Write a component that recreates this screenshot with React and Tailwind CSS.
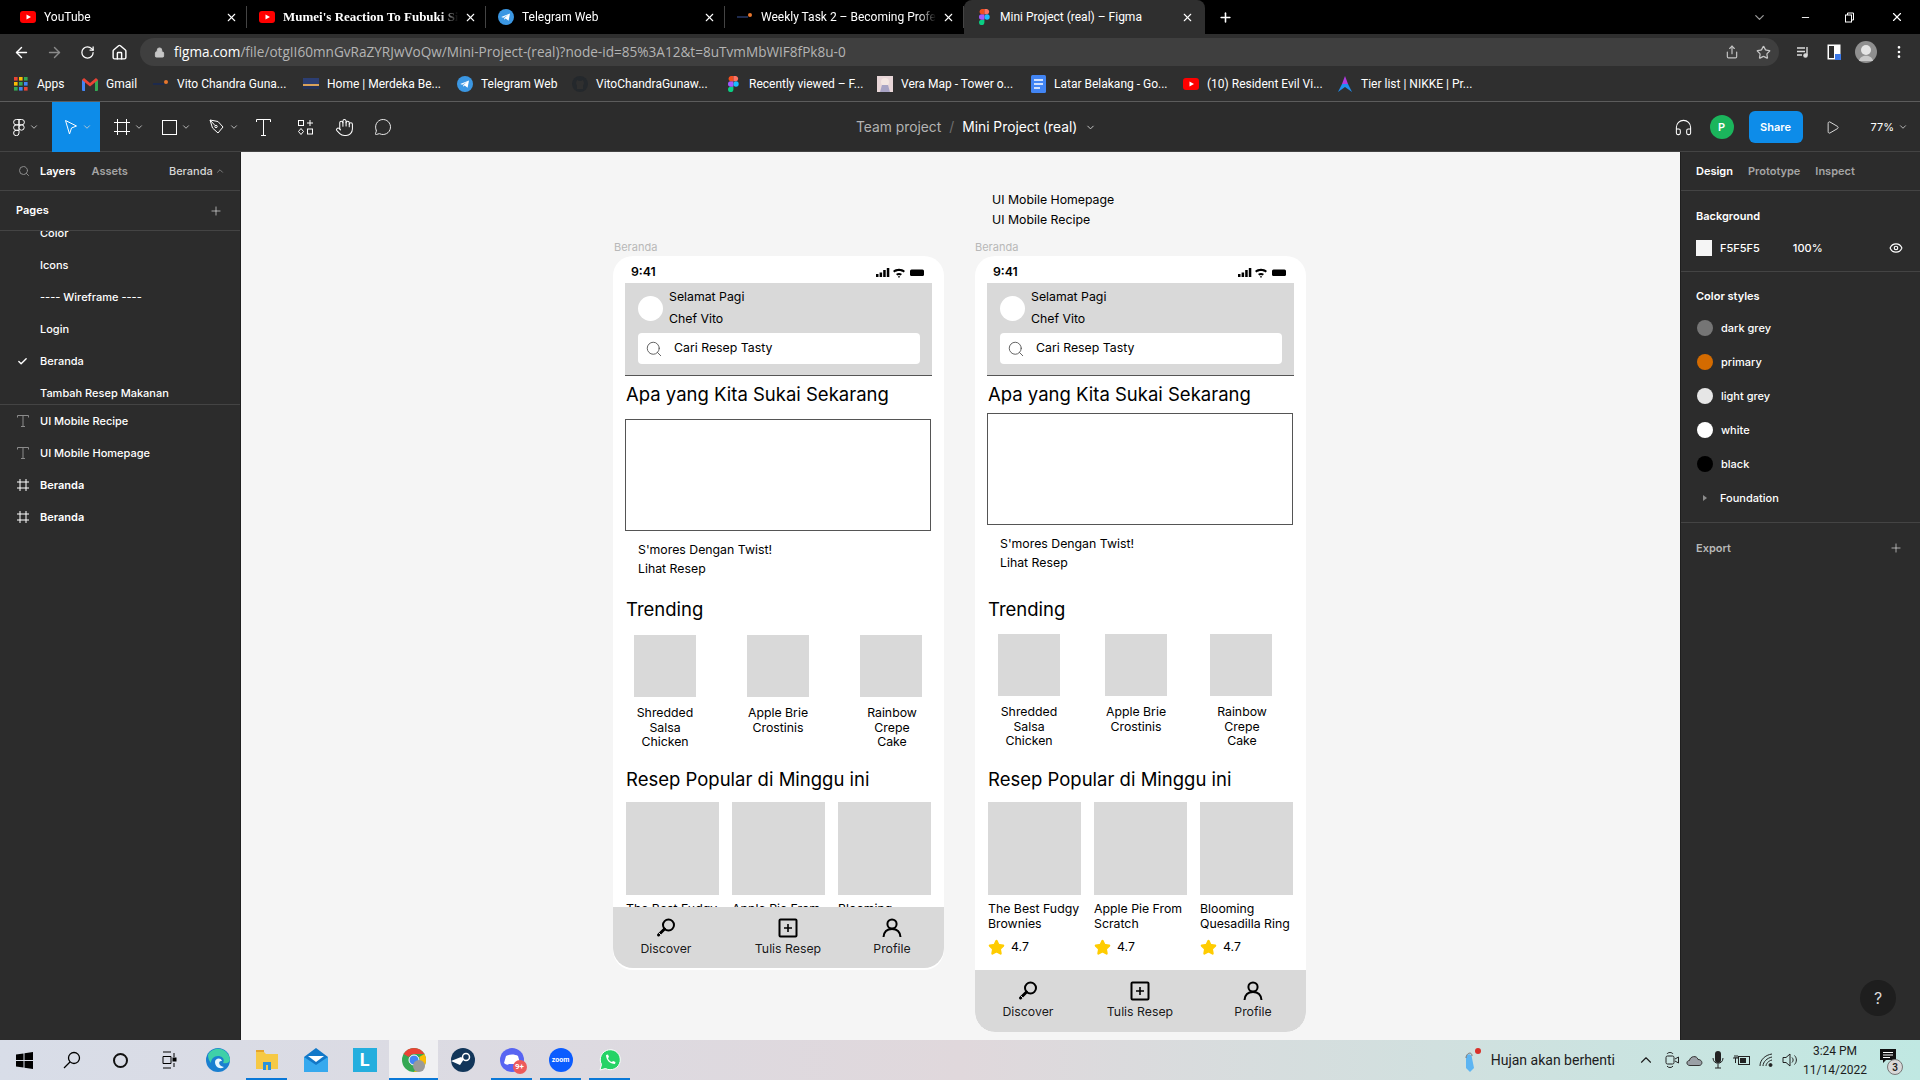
import {
  ArrowLeft,
  ArrowRight,
  RotateCw,
  Home,
  Lock,
  Share,
  Star,
  ChevronDown,
  ChevronUp,
  X,
  Plus,
  Minus,
  Search,
  Check,
  Eye,
  Hand,
  MessageCircle,
  Play,
  Headphones,
  MoreVertical,
} from "lucide-react";

function YoutubeIcon() {
  return (
    <svg width="16" height="16" viewBox="0 0 16 16">
      <rect x="0" y="2" width="16" height="12" rx="3" fill="#f00" />
      <path d="M6.5 5.5 L11 8 L6.5 10.5 Z" fill="#fff" />
    </svg>
  );
}

function TelegramIcon() {
  return (
    <svg width="16" height="16" viewBox="0 0 16 16">
      <circle cx="8" cy="8" r="8" fill="#3b97e3" />
      <path d="M3.2 8 L12 4.4 L10.6 11.8 L7.6 9.6 L6.4 10.8 L6.2 9 L10.2 5.8 L5.2 8.8 Z" fill="#fff" />
    </svg>
  );
}

function FigmaIcon() {
  return (
    <svg width="11" height="16" viewBox="0 0 11 16">
      <circle cx="8" cy="8" r="2.7" fill="#1abcfe" />
      <path d="M5.4 10.7 H2.7 a2.7 2.7 0 1 0 2.7 2.7 Z" fill="#0acf83" />
      <path d="M5.4 5.3 H2.7 a2.7 2.7 0 0 0 0 5.4 H5.4 Z" fill="#a259ff" />
      <path d="M5.4 0 H2.7 a2.7 2.7 0 0 0 0 5.3 H5.4 Z" fill="#f24e1e" />
      <path d="M5.4 0 H8 a2.7 2.7 0 0 1 0 5.3 H5.4 Z" fill="#ff7262" />
    </svg>
  );
}

function MerdekaIcon() {
  return (
    <svg width="16" height="16" viewBox="0 0 16 16">
      <rect x="0" y="7" width="11" height="2" fill="#1d2a4d" />
      <circle cx="13" cy="6" r="2" fill="#e8772e" />
    </svg>
  );
}

function GmailIcon() {
  return (
    <svg width="16" height="13" viewBox="0 0 16 13">
      <path d="M0 2 L3 1 V13 H1 a1 1 0 0 1 -1 -1 Z" fill="#4285f4" />
      <path d="M16 2 L13 1 V13 H15 a1 1 0 0 0 1 -1 Z" fill="#34a853" />
      <path d="M0 2 L2 0 L8 5 L14 0 L16 2 L8 8.5 Z" fill="#ea4335" />
    </svg>
  );
}

function Favicon({ type }) {
  if (type === "yt") return <YoutubeIcon />;
  if (type === "tg") return <TelegramIcon />;
  if (type === "figma") return <FigmaIcon />;
  if (type === "md") return <MerdekaIcon />;
  if (type === "gmail") return <GmailIcon />;
  if (type === "apps") {
    return (
      <svg width="14" height="14" viewBox="0 0 14 14">
        {[0, 5, 10].map((y, i) =>
          [0, 5, 10].map((x, j) => (
            <rect
              key={`${i}${j}`}
              x={x}
              y={y}
              width="3.6"
              height="3.6"
              fill={["#ea4335", "#fbbc04", "#34a853", "#4285f4"][(i + j) % 4]}
            />
          ))
        )}
      </svg>
    );
  }
  if (type === "news") {
    return (
      <svg width="16" height="14" viewBox="0 0 16 14">
        <rect y="1" width="16" height="6" fill="#2c3e73" />
        <rect y="7" width="16" height="2" fill="#d8a15a" />
        <rect y="9" width="16" height="3" fill="#233056" />
      </svg>
    );
  }
  if (type === "gh") {
    return (
      <svg width="16" height="16" viewBox="0 0 16 16">
        <circle cx="8" cy="8" r="8" fill="#24282c" />
        <path d="M5 13 V10 L4 7 L5 4 L7 5 H9 L11 4 L12 7 L11 10 V13 Z" fill="#2f2f2f" />
      </svg>
    );
  }
  if (type === "vera") {
    return (
      <svg width="16" height="16" viewBox="0 0 16 16">
        <rect width="16" height="16" fill="#e8d6d8" />
        <circle cx="8" cy="6" r="4" fill="#f4e6e2" />
        <path d="M3 16 L5 9 H11 L13 16 Z" fill="#a8a3c4" />
      </svg>
    );
  }
  if (type === "docs") {
    return (
      <svg width="15" height="18" viewBox="0 0 15 18">
        <rect width="15" height="18" rx="1.5" fill="#4285f4" />
        <path d="M3 5 H12 M3 9 H12 M3 13 H9" stroke="#fff" strokeWidth="1.6" />
      </svg>
    );
  }
  if (type === "tier") {
    return (
      <svg width="14" height="16" viewBox="0 0 14 16">
        <path d="M7 0 L10 8 L4 8 Z" fill="#b13be0" />
        <path d="M4 8 H10 L14 16 L7 11 L0 16 Z" fill="#1f8ef1" />
      </svg>
    );
  }
  return null;
}

const tabs = [
  { title: "YouTube", icon: "yt" },
  { title: "Mumei's Reaction To Fubuki Singing", icon: "yt", bold: true },
  { title: "Telegram Web", icon: "tg" },
  { title: "Weekly Task 2 – Becoming Professional", icon: "md" },
];

function TabBar() {
  return (
    <div className="h-[34px] bg-black flex items-stretch pl-[8px] text-white text-[12px]">
      {tabs.map((t) => (
        <div key={t.title} className="w-[239px] flex items-center pl-[12px] pr-[8px] border-r border-[#444] my-[6px]">
          <div className="w-[16px] flex justify-center mr-[8px] shrink-0">
            <Favicon type={t.icon} />
          </div>
          <div
            className={
              t.bold
                ? "flex-1 overflow-hidden whitespace-nowrap text-[13px] font-bold font-[family-name:'Liberation_Serif'] [mask-image:linear-gradient(to_right,black_90%,transparent)]"
                : "flex-1 overflow-hidden whitespace-nowrap [mask-image:linear-gradient(to_right,black_90%,transparent)]"
            }
          >
            {t.title}
          </div>
          <X size={13} className="ml-[6px] shrink-0" strokeWidth={2} />
        </div>
      ))}
      <div className="w-[241px] bg-[#2f2f2f] rounded-t-[8px] flex items-center pl-[15px] pr-[11px]">
        <div className="mr-[10px] flex">
          <FigmaIcon />
        </div>
        <div className="flex-1 whitespace-nowrap overflow-hidden">Mini Project (real) – Figma</div>
        <X size={13} strokeWidth={2} />
      </div>
      <div className="flex items-center ml-[13px]">
        <Plus size={15} strokeWidth={2.5} />
      </div>
      <div className="flex items-center ml-auto">
        <ChevronDown size={15} className="text-[#9a9a9a] mr-[33px]" />
        <Minus size={11} className="mr-[33px]" />
        <svg width="11" height="11" viewBox="0 0 11 11" className="mr-[35px]" fill="none" stroke="#fff">
          <rect x="1.5" y="3" width="6" height="7" />
          <path d="M3.5 3 V1 H9.5 V8 H7.5" />
        </svg>
        <X size={14} className="mr-[16px]" />
      </div>
    </div>
  );
}

function AddressBar() {
  return (
    <div className="h-[34px] pt-[2px] bg-[#2f2f2f] flex items-center text-white">
      <ArrowLeft size={17} className="ml-[13px]" />
      <ArrowRight size={17} className="ml-[16px] text-[#8a8a8a]" />
      <RotateCw size={15} className="ml-[17px]" />
      <Home size={17} className="ml-[16px]" />
      <div className="ml-[12px] w-[1639px] h-[28px] rounded-full bg-[#3f3f3f] flex items-center pl-[14px] pr-[8px]">
        <Lock size={11} className="text-[#c6c6c6] mr-[9px]" fill="#c6c6c6" />
        <span className="text-[13.6px] whitespace-nowrap font-[family-name:'Open_Sans']">
          figma.com
          <span className="text-[#b4b4b4]">/file/otgII60mnGvRaZYRJwVoQw/Mini-Project-(real)?node-id=85%3A12&t=8uTvmMbWIF8fPk8u-0</span>
        </span>
        <Share size={14} className="ml-auto text-[#c6c6c6] mr-[17px]" />
        <Star size={15} className="text-[#c6c6c6]" />
      </div>
      <svg width="14" height="14" viewBox="0 0 14 14" className="ml-[17px]" fill="none" stroke="#dcdcdc" strokeWidth="1.4">
        <path d="M1 3 H9 M1 6.5 H9 M1 10 H6 M11 2 V10" />
        <circle cx="9.5" cy="10.5" r="1.6" fill="#dcdcdc" />
      </svg>
      <svg width="14" height="16" viewBox="0 0 14 16" className="ml-[17px]">
        <rect x="0.5" y="0.5" width="13" height="15" fill="#fff" />
        <rect x="2" y="2" width="5" height="12" fill="#2f2f2f" />
        <rect x="8" y="10" width="6" height="6" fill="#3b78e7" />
      </svg>
      <svg width="22" height="22" viewBox="0 0 22 22" className="ml-[14px]">
        <circle cx="11" cy="11" r="11" fill="#8f8f8f" />
        <circle cx="11" cy="9" r="5" fill="#e4e4e4" />
        <path d="M4 20 C5 13 17 13 18 20 Z" fill="#c9c9c9" />
      </svg>
      <MoreVertical size={16} className="ml-[14px]" />
    </div>
  );
}

const bookmarks = [
  { title: "Apps", icon: "apps", width: "w-[69px]" },
  { title: "Gmail", icon: "gmail", width: "w-[71px]" },
  { title: "Vito Chandra Guna...", icon: "md", width: "w-[150px]" },
  { title: "Home | Merdeka Be...", icon: "news", width: "w-[154px]" },
  { title: "Telegram Web", icon: "tg", width: "w-[115px]" },
  { title: "VitoChandraGunaw...", icon: "gh", width: "w-[153px]" },
  { title: "Recently viewed – F...", icon: "figma", width: "w-[152px]" },
  { title: "Vera Map - Tower o...", icon: "vera", width: "w-[153px]" },
  { title: "Latar Belakang - Go...", icon: "docs", width: "w-[153px]" },
  { title: "(10) Resident Evil Vi...", icon: "yt", width: "w-[154px]" },
  { title: "Tier list | NIKKE | Pr...", icon: "tier", width: "w-[140px]" },
];

function BookmarkBar() {
  return (
    <div className="h-[34px] pb-[1px] bg-[#2f2f2f] border-b border-[#5c5c5c] flex items-center pl-[13px] text-white text-[12px]">
      {bookmarks.map((b) => (
        <div key={b.title} className={`${b.width} flex items-center shrink-0 whitespace-nowrap`}>
          <div className="w-[16px] flex justify-center mr-[8px]">
            <Favicon type={b.icon} />
          </div>
          {b.title}
        </div>
      ))}
    </div>
  );
}

function SmallChevron() {
  return <ChevronDown size={10} className="text-[#d0d0d0] ml-[4px]" />;
}

function FigmaToolbar() {
  return (
    <div className="h-[50px] bg-[#2c2c2c] shadow-[inset_0_-1px_0_#444] flex items-center text-white text-[13.8px] font-[family-name:Inter] shrink-0">
      <div className="w-[52px] flex items-center justify-center">
        <svg width="12" height="17" viewBox="0 0 12 17" fill="none" stroke="#fff">
          <circle cx="8.5" cy="8.5" r="2.7" />
          <path d="M6 .5 H3.3 a2.7 2.7 0 0 0 0 5.4 H6 Z M6 .5 H8.7 a2.7 2.7 0 0 1 0 5.4 H6 Z M6 5.9 H3.3 a2.7 2.7 0 0 0 0 5.4 H6 Z M6 11.3 H3.3 a2.7 2.7 0 1 0 2.7 2.7 Z" />
        </svg>
        <SmallChevron />
      </div>
      <div className="w-[48px] h-full bg-[#0d8ce9] flex items-center justify-center pl-[4px]">
        <svg width="14" height="17" viewBox="0 0 14 17" fill="none" stroke="#fff">
          <path d="M1.5 1.5 L12.5 7 L7.5 9 L5.5 15 Z" />
        </svg>
        <SmallChevron />
      </div>
      <div className="w-[46px] flex items-center justify-center ml-[6px]">
        <svg width="16" height="16" viewBox="0 0 16 16" fill="none" stroke="#fff">
          <path d="M3.5 0 V16 M12.5 0 V16 M0 3.5 H16 M0 12.5 H16" />
        </svg>
        <SmallChevron />
      </div>
      <div className="w-[48px] flex items-center justify-center">
        <div className="w-[15px] h-[15px] border border-white" />
        <SmallChevron />
      </div>
      <div className="w-[48px] flex items-center justify-center">
        <svg width="16" height="16" viewBox="0 0 16 16" fill="none" stroke="#fff">
          <path d="M1 1 L9 2.5 L14 8 L9 14 L3.5 9 Z M1 1 L6 6.5" />
          <circle cx="7" cy="7.5" r="1.2" />
        </svg>
        <SmallChevron />
      </div>
      <div className="w-[30px] flex items-center justify-center">
        <svg width="15" height="17" viewBox="0 0 15 17" fill="none" stroke="#fff">
          <path d="M.5 3 V.5 H14.5 V3 M7.5 .5 V16.5 M5 16.5 H10" />
        </svg>
      </div>
      <div className="w-[54px] flex items-center justify-center">
        <svg width="15" height="15" viewBox="0 0 15 15" fill="none" stroke="#fff">
          <rect x=".5" y=".5" width="5" height="5" />
          <path d="M9 3 H15 M12 0 V6" />
          <path d="M3 8.5 L5.5 11.5 L3 14.5 L.5 11.5 Z" />
          <rect x="9.5" y="9" width="5" height="5" />
        </svg>
      </div>
      <div className="w-[24px] flex items-center justify-center">
        <Hand size={19} strokeWidth={1.3} />
      </div>
      <div className="w-[54px] flex items-center justify-center">
        <MessageCircle size={18} strokeWidth={1.2} />
      </div>
      <div className="ml-[446px] flex items-center whitespace-nowrap">
        <span className="text-[#b3b3b3]">Team project</span>
        <span className="text-[#6e6e6e] mx-[8px]">/</span>
        <span>Mini Project (real)</span>
        <ChevronDown size={11} className="ml-[8px] text-[#d0d0d0]" />
      </div>
      <div className="ml-auto flex items-center">
        <Headphones size={19} strokeWidth={1.3} />
        <div className="ml-[17px] w-[24px] h-[24px] rounded-full bg-[#1bb55c] flex items-center justify-center text-[11px] font-semibold">
          P
        </div>
        <div className="ml-[15px] w-[54px] h-[32px] rounded-[6px] bg-[#0d8ce9] flex items-center justify-center text-[11px] font-semibold">
          Share
        </div>
        <Play size={15} strokeWidth={1.3} className="ml-[22px]" />
        <span className="ml-[31px] text-[11px]">77%</span>
        <ChevronDown size={10} className="ml-[4px] mr-[12px] text-[#d0d0d0]" />
      </div>
    </div>
  );
}

function PageRow({ label, checked }) {
  return (
    <div className="h-[32px] flex items-center text-white">
      <div className="w-[40px] flex justify-center pl-[4px]">{checked && <Check size={11} strokeWidth={3} />}</div>
      {label}
    </div>
  );
}

function LayerRow({ label, kind }) {
  return (
    <div className={kind === "frame" ? "h-[32px] flex items-center text-white font-semibold" : "h-[32px] flex items-center text-white"}>
      <div className="w-[40px] flex justify-center pl-[6px]">
        {kind === "text" ? (
          <svg width="12" height="12" viewBox="0 0 12 12" fill="none" stroke="#8c8c8c">
            <path d="M.5 2.5 V.5 H11.5 V2.5 M6 .5 V11.5 M4 11.5 H8" />
          </svg>
        ) : (
          <svg width="12" height="12" viewBox="0 0 12 12" fill="none" stroke="#fff">
            <path d="M3 0 V12 M9 0 V12 M0 3 H12 M0 9 H12" />
          </svg>
        )}
      </div>
      {label}
    </div>
  );
}

function LeftPanel() {
  return (
    <div className="w-[241px] bg-[#2c2c2c] border-r border-[#1f1f1f] text-[11px] font-[family-name:Inter] font-medium shrink-0">
      <div className="h-[39px] border-b border-[#444] flex items-center">
        <Search size={12} className="ml-[18px] text-[#8c8c8c]" />
        <span className="ml-[10px] text-white font-semibold">Layers</span>
        <span className="ml-[16px] text-[#a5a5a5] font-semibold">Assets</span>
        <span className="ml-[41px] text-[#d6d6d6]">Beranda</span>
        <ChevronUp size={10} className="ml-[2px] text-[#8c8c8c]" />
      </div>
      <div className="h-[40px] border-b border-[#444] flex items-center pl-[16px] text-white font-semibold">
        Pages
        <Plus size={14} strokeWidth={1} className="ml-auto mr-[17px]" />
      </div>
      <div className="h-[174px] overflow-hidden border-b border-[#444]">
        <div className="-mt-[14px]">
          <PageRow label="Color" />
          <PageRow label="Icons" />
          <PageRow label="---- Wireframe ----" />
          <PageRow label="Login" />
          <PageRow label="Beranda" checked />
          <PageRow label="Tambah Resep Makanan" />
        </div>
      </div>
      <LayerRow label="UI Mobile Recipe" kind="text" />
      <LayerRow label="UI Mobile Homepage" kind="text" />
      <LayerRow label="Beranda" kind="frame" />
      <LayerRow label="Beranda" kind="frame" />
    </div>
  );
}

function Signal() {
  return (
    <svg width="48" height="11" viewBox="0 0 48 11">
      <rect x="0" y="7" width="2.5" height="3" fill="#000" />
      <rect x="3.6" y="5.5" width="2.5" height="4.5" fill="#000" />
      <rect x="7.2" y="3" width="2.5" height="7" fill="#000" />
      <rect x="10.8" y="1" width="2.5" height="9" fill="#000" />
      <path d="M17 4 C20 1 26 1 29 4 L27.5 5.5 C25 3.5 21 3.5 18.5 5.5 Z M20 7 C22 5.5 24 5.5 26 7 L24.6 8.4 C23.6 7.7 22.4 7.7 21.4 8.4 Z M23 11 L21.8 9.6 C22.6 9 23.4 9 24.2 9.6 Z" fill="#000" />
      <rect x="34" y="2.5" width="14" height="6.5" rx="1.5" fill="#000" />
    </svg>
  );
}

function DiscoverIcon() {
  return (
    <svg width="20" height="20" viewBox="0 0 20 20" fill="none" stroke="#000" strokeWidth="2">
      <circle cx="12.5" cy="7" r="5.5" />
      <path d="M8.5 11 L2.5 17" strokeWidth="3" strokeLinecap="round" />
      <path d="M3 15 L5 17" stroke="#d9d9d9" strokeWidth="1" />
    </svg>
  );
}

function TulisIcon() {
  return (
    <svg width="20" height="20" viewBox="0 0 20 20" fill="none" stroke="#000">
      <rect x="1.5" y="1.5" width="17" height="17" rx="1" strokeWidth="2" />
      <path d="M10 6 V14 M6 10 H14" strokeWidth="1.6" />
    </svg>
  );
}

function ProfileIcon() {
  return (
    <svg width="20" height="20" viewBox="0 0 20 20" fill="none" stroke="#000" strokeWidth="2">
      <circle cx="10" cy="6" r="4.6" />
      <path d="M1.5 19 C2 13 6 11 10 11 C14 11 18 13 18.5 19" />
    </svg>
  );
}

function BottomNav({ className, gap1, gap2 }) {
  return (
    <div className={`bg-[#d9d9d9] rounded-b-[20px] flex pl-[3px] text-[12.3px] text-black/90 ${className}`}>
      <div className="w-[100px] flex flex-col items-center">
        <DiscoverIcon />
        <span className="leading-[16px] mt-[3px]">Discover</span>
      </div>
      <div className={`w-[100px] flex flex-col items-center ${gap1}`}>
        <TulisIcon />
        <span className="leading-[16px] mt-[3px]">Tulis Resep</span>
      </div>
      <div className={`w-[100px] flex flex-col items-center ${gap2}`}>
        <ProfileIcon />
        <span className="leading-[16px] mt-[3px]">Profile</span>
      </div>
    </div>
  );
}

const trending = [
  { lines: ["Shredded", "Salsa", "Chicken"], shift: "" },
  { lines: ["Apple Brie", "Crostinis"], shift: "" },
  { lines: ["Rainbow", "Crepe", "Cake"], shift: "translate-x-[1px]" },
];

const popular = [
  ["The Best Fudgy", "Brownies"],
  ["Apple Pie From", "Scratch"],
  ["Blooming", "Quesadilla Ring"],
];

function SectionTitle({ className, children }) {
  return <div className={`h-[24px] leading-[24px] text-[18.5px] text-black pl-[13px] whitespace-nowrap ${className}`}>{children}</div>;
}

function Phone({ className, clipped, s }) {
  return (
    <div className={`absolute w-[331px] bg-white rounded-[20px] overflow-hidden font-[family-name:Inter] text-black ${className}`}>
      <div className="h-[27px] flex items-center justify-between pl-[18px] pr-[20px] pt-[5px]">
        <span className="text-[12.3px] font-semibold leading-[16px]">9:41</span>
        <Signal />
      </div>

      <div className="mx-[12px] h-[93px] bg-[#d9d9d9] border-b border-[#555] pl-[13px] pr-[12px]">
        <div className="flex h-[50px] items-center">
          <div className="w-[25px] h-[25px] rounded-full bg-white" />
          <div className="ml-[6px] text-[12.3px] leading-[22px]">
            <div>Selamat Pagi</div>
            <div>Chef Vito</div>
          </div>
        </div>
        <div className="h-[31px] bg-white rounded-[4px] flex items-center pl-[7px] text-[12.3px]">
          <Search size={18} strokeWidth={1.2} className="text-[#555]" />
          <span className="ml-[11px]">Cari Resep Tasty</span>
        </div>
      </div>

      <SectionTitle className="mt-[6px]">Apa yang Kita Sukai Sekarang</SectionTitle>

      <div className={`mx-[12px] h-[112px] w-[306px] border border-[#555] ${s.hero}`} />

      <div className={`pl-[25px] text-[12.3px] leading-[18px] ${s.caption}`}>
        <div>S'mores Dengan Twist!</div>
        <div className="mt-[0.5px]">Lihat Resep</div>
      </div>

      <SectionTitle className={s.trending}>Trending</SectionTitle>

      <div className={`flex ${s.thumbs}`}>
        {trending.map((item, i) => (
          <div key={item.lines[0]} className={`w-[62px] shrink-0 ${s.thumbGaps[i]}`}>
            <div className="h-[62px] bg-[#d9d9d9]" />
            <div className={`mt-[9px] flex flex-col items-center text-[12.3px] leading-[14.7px] whitespace-nowrap ${item.shift}`}>
              {item.lines.map((l) => (
                <div key={l}>{l}</div>
              ))}
            </div>
          </div>
        ))}
      </div>

      <SectionTitle className={s.popular}>Resep Popular di Minggu ini</SectionTitle>

      <div className="mt-[11px] pl-[13px] flex gap-[13px]">
        {popular.map((lines) => (
          <div key={lines[0]} className="w-[93px] shrink-0">
            <div className="h-[93px] bg-[#d9d9d9]" />
            <div className="mt-[7px] text-[12.3px] leading-[14.7px] whitespace-nowrap">
              {lines.map((l) => (
                <div key={l}>{l}</div>
              ))}
            </div>
            <div className="mt-[8px] flex items-center h-[16px] text-[12.3px]">
              <Star size={17} fill="#ffcc00" stroke="#ffcc00" />
              <span className="ml-[6px]">4.7</span>
            </div>
          </div>
        ))}
      </div>

      {clipped ? (
        <BottomNav className="absolute left-0 right-0 bottom-[2px] h-[61px] pt-[11px]" gap1="ml-[22px]" gap2="ml-[4px]" />
      ) : (
        <BottomNav className="mt-[14px] h-[62px] pt-[11px]" gap1="ml-[12px]" gap2="ml-[13px]" />
      )}
    </div>
  );
}

function Canvas() {
  return (
    <div className="relative flex-1 bg-[#f5f5f5] font-[family-name:Inter]">
      <div className="absolute left-[751px] top-[38px] text-[12.3px] leading-[20px] text-black">
        <div>UI Mobile Homepage</div>
        <div>UI Mobile Recipe</div>
      </div>

      <div className="absolute left-[373px] top-[88px] text-[11px] leading-[14px] text-[#b8b8b8]">Beranda</div>
      <div className="absolute left-[734px] top-[88px] text-[11px] leading-[14px] text-[#b8b8b8]">Beranda</div>

      <Phone
        className="left-[372px] top-[104px] h-[714px]"
        clipped
        s={{
          hero: "mt-[13px]",
          caption: "mt-[10px]",
          trending: "mt-[19.5px]",
          thumbs: "mt-[14px]",
          thumbGaps: ["ml-[21px]", "ml-[51px]", "ml-[51px]"],
          popular: "mt-[17px]",
        }}
      />
      <Phone
        className="left-[734px] top-[104px]"
        s={{
          hero: "mt-[7px]",
          caption: "mt-[10px]",
          trending: "mt-[25.5px]",
          thumbs: "mt-[13px]",
          thumbGaps: ["ml-[23px]", "ml-[45px]", "ml-[43px]"],
          popular: "mt-[18px]",
        }}
      />
    </div>
  );
}

const colorStyles = [
  { name: "dark grey", color: "bg-[#757575]" },
  { name: "primary", color: "bg-[#d46b00]" },
  { name: "light grey", color: "bg-[#e6e6e6]" },
  { name: "white", color: "bg-white" },
  { name: "black", color: "bg-black" },
];

function RightPanel() {
  return (
    <div className="relative w-[240px] bg-[#2c2c2c] border-l border-[#1f1f1f] text-[11px] font-[family-name:Inter] font-medium text-white shrink-0">
      <div className="h-[39px] border-b border-[#444] flex items-center pl-[15px] font-semibold">
        <span>Design</span>
        <span className="ml-[15px] text-[#a5a5a5]">Prototype</span>
        <span className="ml-[15px] text-[#a5a5a5]">Inspect</span>
      </div>
      <div className="h-[81px] border-b border-[#444] px-[15px]">
        <div className="h-[49px] flex items-center font-semibold pt-[1px]">Background</div>
        <div className="flex items-center h-[16px]">
          <div className="w-[16px] h-[16px] bg-[#f5f5f5]" />
          <span className="ml-[8px]">F5F5F5</span>
          <span className="ml-[33px]">100%</span>
          <Eye size={14} className="ml-auto mr-[2px]" />
        </div>
      </div>
      <div className="h-[251px] border-b border-[#444] px-[15px]">
        <div className="h-[39px] flex items-center font-semibold pt-[9px]">Color styles</div>
        {colorStyles.map((c) => (
          <div key={c.name} className="h-[34px] flex items-center">
            <div className={`w-[16px] h-[16px] rounded-full ml-[1px] ${c.color}`} />
            <span className="ml-[8px]">{c.name}</span>
          </div>
        ))}
        <div className="h-[34px] flex items-center">
          <svg width="6" height="6" viewBox="0 0 6 6" className="ml-[6px]">
            <path d="M1 0 L5 3 L1 6 Z" fill="#8c8c8c" />
          </svg>
          <span className="ml-[12px]">Foundation</span>
        </div>
      </div>
      <div className="h-[50px] flex items-center pl-[15px] pr-[16px] font-semibold text-[#b8b8b8]">
        Export
        <Plus size={14} strokeWidth={1} className="ml-auto mr-[1px] text-white" />
      </div>
      <div className="absolute right-[24px] bottom-[24px] w-[36px] h-[36px] rounded-full bg-[#1e1e1e] flex items-center justify-center text-[16px] font-normal text-[#d8d8d8]">
        ?
      </div>
    </div>
  );
}

function TaskIcon({ children, active, under }) {
  let cls = "w-[49px] h-[40px] flex items-center justify-center relative";
  if (active) cls += " bg-[#f0f0f2]";
  return (
    <div className={cls}>
      {children}
      {under && <div className="absolute left-[4px] right-[4px] bottom-0 h-[2px] bg-[#0a78d7]" />}
      {active && <div className="absolute left-0 right-0 bottom-0 h-[2px] bg-[#0a78d7]" />}
    </div>
  );
}

function Taskbar() {
  return (
    <div className="h-[40px] shrink-0 flex items-center bg-gradient-to-r from-[#d8dde8] via-[#e0d8dc] to-[#c0e8e2] text-[#1c1c1c]">
      <div className="w-[48px] flex justify-center">
        <svg width="17" height="17" viewBox="0 0 17 17" fill="#000">
          <path d="M0 2.5 L7.5 1.4 V8 H0 Z M8.5 1.2 L17 0 V8 H8.5 Z M0 9 H7.5 V15.6 L0 14.5 Z M8.5 9 H17 V17 L8.5 15.8 Z" />
        </svg>
      </div>
      <div className="w-[48px] flex justify-center">
        <svg width="18" height="18" viewBox="0 0 18 18" fill="none" stroke="#000" strokeWidth="1.3">
          <circle cx="11" cy="7" r="5.5" />
          <path d="M7 11 L1 17" />
        </svg>
      </div>
      <div className="w-[48px] flex justify-center">
        <div className="w-[15px] h-[15px] rounded-full border-[2.5px] border-[#111]" />
      </div>
      <div className="w-[49px] flex justify-center">
        <svg width="16" height="18" viewBox="0 0 16 18" fill="none" stroke="#000">
          <path d="M2 1 H10 M2 17 H10 M2 5.5 H10 V12.5 H2 Z M13 2 V6 M13 12 V16" />
          <rect x="12" y="7" width="3" height="3" fill="#000" />
        </svg>
      </div>
      <TaskIcon>
        <svg width="24" height="24" viewBox="0 0 24 24">
          <circle cx="12" cy="12" r="12" fill="#1a7fd0" />
          <path d="M2 7 C6 -2 21 -2 24 11 C24 15 20 16 17 15 C19 12 17 8 12 8 C8 8 5 11 5 15 C3 13 2 10 2 7 Z" fill="#3fd0a8" />
          <path d="M9 14 C9 10 15 9 16 13 C12 12 12 18 18 19 C14 22 9 19 9 14 Z" fill="#e8f7ff" />
        </svg>
      </TaskIcon>
      <TaskIcon under>
        <svg width="22" height="20" viewBox="0 0 22 20">
          <path d="M0 2 H8 L10 4 H22 V19 H0 Z" fill="#f6c945" />
          <path d="M0 0 H8 V2 H0 Z" fill="#e6a42b" />
          <rect x="7" y="12" width="8" height="8" fill="#2a93d8" />
          <rect x="10" y="15" width="2" height="5" fill="#f6c945" />
        </svg>
      </TaskIcon>
      <TaskIcon>
        <svg width="24" height="24" viewBox="0 0 24 24">
          <path d="M0 9 L12 0 L24 9 V24 H0 Z" fill="#1278c8" />
          <path d="M0 9 L12 17 L24 9 V24 H0 Z" fill="#36a9ee" />
          <path d="M4 8 H20 L12 14 Z" fill="#fff" />
        </svg>
      </TaskIcon>
      <TaskIcon>
        <div className="w-[24px] h-[24px] bg-[#24aede] flex items-center justify-center text-white text-[18px] font-bold leading-none">
          L
        </div>
      </TaskIcon>
      <TaskIcon active>
        <svg width="24" height="24" viewBox="0 0 24 24">
          <circle cx="12" cy="12" r="12" fill="#34a853" />
          <path d="M12 0 A12 12 0 0 1 22.4 6 H12 A6 6 0 0 0 6.8 9 L1.6 6 A12 12 0 0 1 12 0 Z" fill="#ea4335" />
          <path d="M22.4 6 A12 12 0 0 1 12 24 L17.2 15 A6 6 0 0 0 17.2 9 Z" fill="#fbbc04" />
          <circle cx="12" cy="12" r="5" fill="#4285f4" stroke="#fff" />
          <circle cx="17" cy="18" r="6" fill="#9a9a9a" />
        </svg>
      </TaskIcon>
      <TaskIcon>
        <svg width="24" height="24" viewBox="0 0 24 24">
          <circle cx="12" cy="12" r="12" fill="#12365a" />
          <circle cx="15" cy="9" r="3.5" fill="none" stroke="#fff" strokeWidth="1.5" />
          <path d="M0 13 L9 17 L13 11 L10 9 Z" fill="#fff" />
        </svg>
      </TaskIcon>
      <TaskIcon under>
        <div className="relative">
          <svg width="24" height="24" viewBox="0 0 24 24" className="block">
            <circle cx="12" cy="12" r="12" fill="#5865f2" />
            <path d="M6 8 C9 6 15 6 18 8 L20 15 C18 17 16 17 15 16 H9 C8 17 6 17 4 15 Z" fill="#fff" />
          </svg>
          <div className="absolute -right-[3px] -bottom-[2px] w-[14px] h-[14px] rounded-full bg-[#ed5a5a] text-white text-[8px] font-bold flex items-center justify-center">
            9+
          </div>
        </div>
      </TaskIcon>
      <TaskIcon under>
        <div className="w-[24px] h-[24px] rounded-full bg-[#0b5cff] flex items-center justify-center text-white text-[7px] font-bold">
          zoom
        </div>
      </TaskIcon>
      <TaskIcon under>
        <svg width="22" height="22" viewBox="0 0 22 22">
          <path d="M1 21 L2.5 15.5 A10 10 0 1 1 6.5 19.5 Z" fill="#25d366" stroke="#fff" />
          <path d="M7 6 C7 11 11 15 16 15 L16.5 13 L14 12 L13 13 C11 12.5 9.5 11 9 9 L10 8 L9 5.5 Z" fill="#fff" />
        </svg>
      </TaskIcon>

      <div className="ml-auto flex items-center">
        <svg width="12" height="24" viewBox="0 0 12 24">
          <path d="M2 10 C2 5 8 5 8 10 L10 20 L6 24 L2 20 Z" fill="#5db5f2" />
          <path d="M2 10 C2 5 8 3 8 8" fill="none" stroke="#777" />
        </svg>
        <div className="w-[6px] h-[6px] rounded-full bg-[#d9302a] -mt-[18px] -ml-[1px]" />
        <span className="ml-[10px] text-[14px] whitespace-nowrap">Hujan akan berhenti</span>
        <ChevronUp size={18} strokeWidth={1.5} className="ml-[22px]" />
        <svg width="14" height="18" viewBox="0 0 14 18" fill="none" stroke="#222" className="ml-[10px]">
          <rect x="1" y="5" width="8" height="8" rx="1.5" />
          <path d="M10 8 L13.5 6 V12 L10 10 M2 3 C3 1 7 1 8 3 M2 15 C3 17 7 17 8 15" />
        </svg>
        <svg width="17" height="11" viewBox="0 0 17 11" className="ml-[7px]" fill="#9aa0a6" stroke="#333">
          <path d="M4 10.5 C0 10.5 0 5.5 3.5 5.5 C4 1 11 0 12 4.5 C17 4.5 17 10.5 13 10.5 Z" />
        </svg>
        <svg width="12" height="18" viewBox="0 0 12 18" className="ml-[9px]">
          <rect x="3" y="0" width="6" height="12" rx="3" fill="#222" />
          <path d="M1 7 C1 14 11 14 11 7 M6 13 V17 M3 17 H9" fill="none" stroke="#222" />
        </svg>
        <svg width="17" height="12" viewBox="0 0 17 12" className="ml-[9px]" fill="none" stroke="#222">
          <rect x="5.5" y="2.5" width="11" height="8" />
          <rect x="7.5" y="4.5" width="5" height="4" fill="#222" />
          <path d="M0 4 H5 M2 1 V4 M4 1 V4 M2.5 4 V9" />
        </svg>
        <svg width="14" height="14" viewBox="0 0 14 14" className="ml-[9px]" fill="none" stroke="#222">
          <path d="M1 13 C1 7 6 2 13 1 M4 13 C4 9 8 5 13 4 M7 13 C7 11 9 8 13 7" />
          <circle cx="11.5" cy="12" r="1.5" fill="#222" />
        </svg>
        <svg width="16" height="14" viewBox="0 0 16 14" className="ml-[9px]" fill="none" stroke="#222">
          <path d="M1 4.5 H4 L8 1 V13 L4 9.5 H1 Z M10 4.5 C11.5 6 11.5 8 10 9.5 M12.5 2.5 C15 5 15 9 12.5 11.5" />
        </svg>
        <div className="ml-[6px] w-[62px] flex flex-col items-center text-[12px] leading-[19px] pt-[1px] whitespace-nowrap">
          <div>3:24 PM</div>
          <div>11/14/2022</div>
        </div>
        <div className="relative w-[24px] h-[24px] ml-[9px] mr-[21px]">
          <svg width="16" height="15" viewBox="0 0 16 15" className="ml-[5px] mt-[1px]">
            <path d="M0 0 H16 V11 H6 L3 14 V11 H0 Z" fill="#111" />
            <path d="M3 3.5 H13 M3 6 H13 M3 8.5 H10" stroke="#fff" />
          </svg>
          <div className="absolute right-[-4px] bottom-[-3px] w-[16px] h-[16px] rounded-full bg-[#d8d8d8] border border-[#777] flex items-center justify-center text-[10px] font-semibold">
            3
          </div>
        </div>
      </div>
    </div>
  );
}

export default function App() {
  return (
    <div className="w-[1920px] h-[1080px] overflow-hidden flex flex-col font-[family-name:Roboto]">
      <TabBar />
      <AddressBar />
      <BookmarkBar />
      <FigmaToolbar />
      <div className="flex flex-1 min-h-0">
        <LeftPanel />
        <Canvas />
        <RightPanel />
      </div>
      <Taskbar />
    </div>
  );
}
